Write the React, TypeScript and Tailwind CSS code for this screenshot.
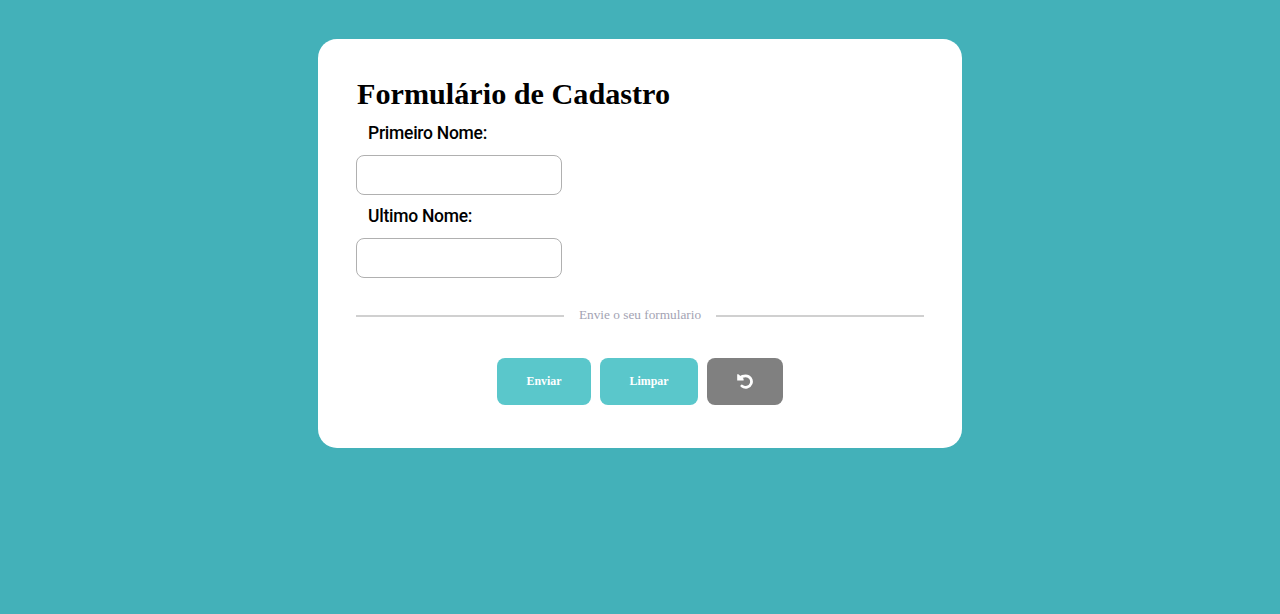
function UndoIcon() {
  return (
    <svg width="16" height="15" viewBox="0 0 16 15" fill="none" aria-hidden="true">
      <path d="M0.2 0.2h1.2l5.2 4.6v1.7H0.2Z" fill="currentColor" />
      <path d="M2.8 3.9C4.6 2.3 6.6 1.8 8.7 1.8A5.8 5.8 0 1 1 4.9 12" stroke="currentColor" strokeWidth="2.8" strokeLinecap="round" />
    </svg>
  );
}

function Field({ label, id }: { label: string; id: string }) {
  return (
    <div className="flex flex-col items-start">
      <label htmlFor={id} className="ml-[12px] h-[42px] pt-[8px] text-[17.5px] leading-[24px] font-medium tracking-[-0.26px] font-['Roboto',sans-serif]">
        {label}
      </label>
      <input id={id} type="text" className="h-10 w-[206px] rounded-lg border border-[#b0b0b0] bg-white px-3 outline-none" />
    </div>
  );
}

export default function App() {
  return (
    <main className="flex min-h-screen items-start justify-center bg-[#43b1b9] pt-[39px] font-['Liberation_Serif',serif] text-black">
      <form className="h-[409px] w-[644px] rounded-[19px] bg-white px-[38px] pt-[37px]">
        <h1 className="mb-px h-[36px] pl-px text-[30.2px] leading-[36px] font-bold">Formulário de Cadastro</h1>
        <div className="flex flex-col gap-px">
          <Field id="first" label="Primeiro Nome:" />
          <Field id="last" label="Ultimo Nome:" />
        </div>
        <div className="mt-[28px] flex h-[18px] items-center gap-[15px] text-[13.3px] text-[#a3a3b3]">
          <span className="mt-px h-[2px] flex-1 bg-[#d0d0d0]" />
          <span>Envie o seu formulario</span>
          <span className="mt-px h-[2px] flex-1 bg-[#d0d0d0]" />
        </div>
        <div className="mt-[34px] flex h-[47px] justify-center gap-[9px] text-[11.9px] font-bold text-white">
          <button type="button" className="w-[94px] rounded-lg bg-[#5ac7cb]">Enviar</button>
          <button type="button" className="w-[98px] rounded-lg bg-[#5ac7cb]">Limpar</button>
          <button type="button" aria-label="Desfazer" className="flex w-[76px] items-center justify-center rounded-lg bg-[#808080]">
            <UndoIcon />
          </button>
        </div>
      </form>
    </main>
  );
}
